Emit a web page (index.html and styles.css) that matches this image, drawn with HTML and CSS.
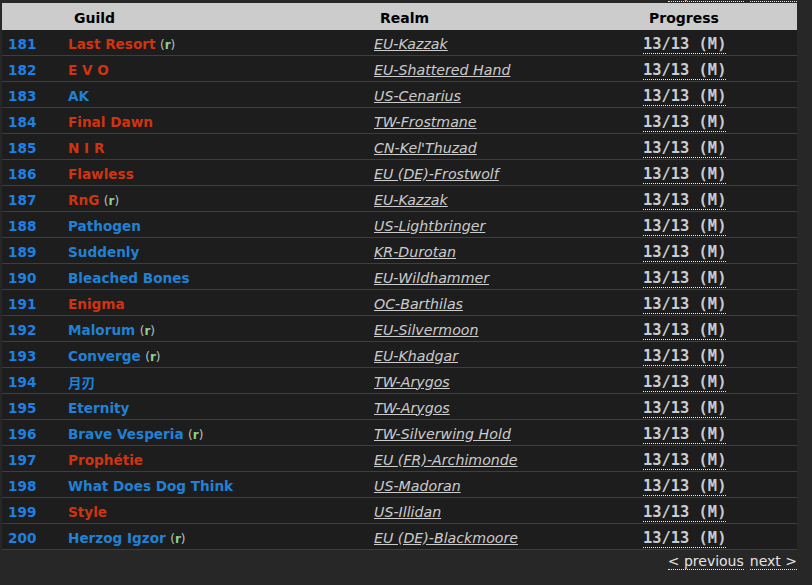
FILE: index.html
```html
<!DOCTYPE html>
<html>
<head>
<meta charset="utf-8">
<link rel="stylesheet" href="styles.css">
</head>
<body>
<div class="wrap">
  <div class="pager top"><a class="plink">&lt; previous</a><a class="plink">next &gt;</a></div>
  <table class="ranks">
    <colgroup><col class="c-rank"><col class="c-guild"><col class="c-realm"><col class="c-prog"></colgroup>
    <thead>
      <tr><th></th><th>Guild</th><th>Realm</th><th>Progress</th></tr>
    </thead>
    <tbody>
      <tr><td class="rank">181</td><td><span class="g h">Last Resort</span> <span class="rec">(<b>r</b>)</span></td><td><a class="realm">EU-Kazzak</a></td><td><span class="prog">13/13 (M)</span></td></tr>
      <tr><td class="rank">182</td><td><span class="g h">E V O</span></td><td><a class="realm">EU-Shattered Hand</a></td><td><span class="prog">13/13 (M)</span></td></tr>
      <tr><td class="rank">183</td><td><span class="g a">AK</span></td><td><a class="realm">US-Cenarius</a></td><td><span class="prog">13/13 (M)</span></td></tr>
      <tr><td class="rank">184</td><td><span class="g h">Final Dawn</span></td><td><a class="realm">TW-Frostmane</a></td><td><span class="prog">13/13 (M)</span></td></tr>
      <tr><td class="rank">185</td><td><span class="g h">N I R</span></td><td><a class="realm">CN-Kel'Thuzad</a></td><td><span class="prog">13/13 (M)</span></td></tr>
      <tr><td class="rank">186</td><td><span class="g h">Flawless</span></td><td><a class="realm">EU (DE)-Frostwolf</a></td><td><span class="prog">13/13 (M)</span></td></tr>
      <tr><td class="rank">187</td><td><span class="g h">RnG</span> <span class="rec">(<b>r</b>)</span></td><td><a class="realm">EU-Kazzak</a></td><td><span class="prog">13/13 (M)</span></td></tr>
      <tr><td class="rank">188</td><td><span class="g a">Pathogen</span></td><td><a class="realm">US-Lightbringer</a></td><td><span class="prog">13/13 (M)</span></td></tr>
      <tr><td class="rank">189</td><td><span class="g a">Suddenly</span></td><td><a class="realm">KR-Durotan</a></td><td><span class="prog">13/13 (M)</span></td></tr>
      <tr><td class="rank">190</td><td><span class="g a">Bleached Bones</span></td><td><a class="realm">EU-Wildhammer</a></td><td><span class="prog">13/13 (M)</span></td></tr>
      <tr><td class="rank">191</td><td><span class="g h">Enigma</span></td><td><a class="realm">OC-Barthilas</a></td><td><span class="prog">13/13 (M)</span></td></tr>
      <tr><td class="rank">192</td><td><span class="g a">Malorum</span> <span class="rec">(<b>r</b>)</span></td><td><a class="realm">EU-Silvermoon</a></td><td><span class="prog">13/13 (M)</span></td></tr>
      <tr><td class="rank">193</td><td><span class="g a">Converge</span> <span class="rec">(<b>r</b>)</span></td><td><a class="realm">EU-Khadgar</a></td><td><span class="prog">13/13 (M)</span></td></tr>
      <tr><td class="rank">194</td><td><span class="g a">月刃</span></td><td><a class="realm">TW-Arygos</a></td><td><span class="prog">13/13 (M)</span></td></tr>
      <tr><td class="rank">195</td><td><span class="g a">Eternity</span></td><td><a class="realm">TW-Arygos</a></td><td><span class="prog">13/13 (M)</span></td></tr>
      <tr><td class="rank">196</td><td><span class="g a">Brave Vesperia</span> <span class="rec">(<b>r</b>)</span></td><td><a class="realm">TW-Silverwing Hold</a></td><td><span class="prog">13/13 (M)</span></td></tr>
      <tr><td class="rank">197</td><td><span class="g h">Prophétie</span></td><td><a class="realm">EU (FR)-Archimonde</a></td><td><span class="prog">13/13 (M)</span></td></tr>
      <tr><td class="rank">198</td><td><span class="g a">What Does Dog Think</span></td><td><a class="realm">US-Madoran</a></td><td><span class="prog">13/13 (M)</span></td></tr>
      <tr><td class="rank">199</td><td><span class="g h">Style</span></td><td><a class="realm">US-Illidan</a></td><td><span class="prog">13/13 (M)</span></td></tr>
      <tr><td class="rank">200</td><td><span class="g a">Herzog Igzor</span> <span class="rec">(<b>r</b>)</span></td><td><a class="realm">EU (DE)-Blackmoore</a></td><td><span class="prog">13/13 (M)</span></td></tr>
    </tbody>
  </table>
  <div class="pager bottom"><a class="plink">&lt; previous</a><a class="plink">next &gt;</a></div>
</div>
</body>
</html>
```

FILE: styles.css
```css
html, body {
  margin: 0;
  padding: 0;
  background: #272727;
  overflow: hidden;
}
body {
  font-family: "DejaVu Sans", Verdana, sans-serif;
  font-size: 14px;
  color: #ddd;
}
.wrap {
  width: 795px;
  margin-left: 2px;
}
.pager {
  display: flex;
  justify-content: flex-end;
  gap: 6px;
}
.pager.top {
  margin-top: -15px;
}
.pager.bottom {
  margin-top: 3px;
}
.plink {
  display: inline-block;
  line-height: 16px;
  border-bottom: 1px dotted #e8e8e8;
  color: #e4e4e4;
  font-size: 14px;
}
.ranks {
  width: 795px;
  table-layout: fixed;
  border-collapse: collapse;
  margin-top: 1px;
  background: #1d1d1d;
}
.c-rank { width: 60px; }
.c-guild { width: 306px; }
.c-realm { width: 269px; }
.c-prog { width: 160px; }
.ranks th {
  background: #cccccc;
  color: #000;
  font-weight: bold;
  font-size: 14px;
  text-align: left;
  height: 25px;
  padding: 2px 0 0 12px;
}
.ranks td {
  height: 23px;
  padding: 2px 0 0 6px;
  border-bottom: 1px solid #3e3e3e;
  white-space: nowrap;
}
.rank {
  color: #1d80e2;
  font-weight: bold;
  font-size: 13.6px;
}
.g {
  font-weight: bold;
  font-size: 13.6px;
  font-family: "DejaVu Sans", "Noto Sans CJK SC", sans-serif;
}
.g.h { color: #cf3410; }
.g.a { color: #2181d4; }
.rec {
  font-size: 12px;
  color: #b8c0c8;
}
.rec b {
  color: #8fcf8f;
}
.realm {
  color: #cbcbcb;
  font-style: italic;
  text-decoration: underline;
  font-size: 14.2px;
}
.prog {
  font-family: "DejaVu Sans Mono", monospace;
  font-weight: bold;
  font-size: 15.4px;
  color: #c9ccd2;
  border-bottom: 1px dotted #f0f0f0;
}
```
